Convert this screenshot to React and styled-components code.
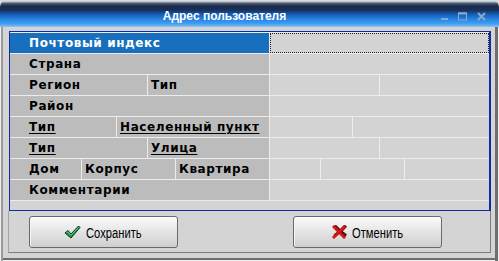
import React from "react";
import styled, { createGlobalStyle } from "styled-components";

const Global = createGlobalStyle`
  html, body { margin: 0; padding: 0; background: #dcdcdc; }
  #root { width: 499px; height: 261px; }
`;

const Window = styled.div`
  width: 499px;
  height: 261px;
  display: flex;
  flex-direction: column;
  overflow: hidden;
  font-family: "DejaVu Sans", "Liberation Sans", sans-serif;
`;

const TitleBar = styled.div`
  height: 27px;
  flex: none;
  display: flex;
  align-items: center;
  border-radius: 7px 7px 0 0;
  background: linear-gradient(
    to bottom,
    #e4e4e4 0px,
    #b4bcc6 2px,
    #51617e 3px,
    #1d2a45 6px,
    #16305e 10px,
    #1763bd 15px,
    #2b89e6 20px,
    #45a0f2 24px,
    #8cc4f2 27px
  );
`;

const Title = styled.div`
  flex: 1;
  text-align: center;
  color: #ffffff;
  font-family: "Liberation Sans", Arial, sans-serif;
  font-weight: bold;
  font-size: 12px;
  padding: 5px 0 0 8px;
`;

const Controls = styled.div`
  width: 58px;
  display: flex;
  align-items: center;
  padding-top: 5px;
`;

const ControlIcon = styled.svg`
  display: block;
  margin-right: ${(p) => p.$mr}px;
`;

const Body = styled.div`
  flex: 1;
  display: flex;
  flex-direction: column;
  background: #d4d4d4;
  padding: 4px 8px 0 8px;
  box-shadow: inset 1px 0 #eeeeee, inset 3px 0 #9a9a9a, inset -1px 0 #eeeeee,
    inset -4px 0 #6e6e6e, inset 0 -1px #eeeeee, inset 0 -3px #6e6e6e;
`;

const Frame = styled.div`
  margin-left: 1px;
  height: 180px;
  box-sizing: border-box;
  border: 1px solid #0d2f9e;
  border-right-width: 2px;
  background: #d4d4d4;
  display: flex;
  flex-direction: column;
`;

const Rows = styled.div`
  display: flex;
  flex-direction: column;
  gap: 1px;
  padding: 1px 0;
  background: #ececec;
`;

const Row = styled.div`
  display: flex;
  gap: 1px;
  height: 20px;
`;

const LabelGroup = styled.div`
  width: 259px;
  flex: none;
  display: flex;
  gap: 1px;
`;

const ValueGroup = styled.div`
  flex: 1;
  display: flex;
  gap: 1px;
`;

const LabelCell = styled.div`
  ${(p) => (p.$w ? `width: ${p.$w}px; flex: none;` : "flex: 1;")}
  box-sizing: border-box;
  padding-left: ${(p) => (p.$first ? 19 : 3)}px;
  display: flex;
  align-items: center;
  background: ${(p) => (p.$selected ? "#176fbd" : "#bcbcbc")};
  color: ${(p) => (p.$selected ? "#ffffff" : "#000000")};
  font-family: "DejaVu Sans", Verdana, sans-serif;
  font-weight: bold;
  font-size: 12px;
  letter-spacing: 0.6px;
  white-space: nowrap;
  text-decoration: ${(p) => (p.$link ? "underline" : "none")};
  text-underline-offset: 2px;
`;

const ValueCell = styled.div`
  ${(p) => (p.$w ? `width: ${p.$w}px; flex: none;` : "flex: 1;")}
  box-sizing: border-box;
  background: #d3d3d3;
  border: ${(p) => (p.$focus ? "1px dotted #222" : "none")};
`;

const Panel = styled.div`
  width: 483px;
  height: 42px;
  box-sizing: border-box;
  border-left: 1px solid #a4a4a4;
  border-right: 1px solid #7c7c7c;
  border-bottom: 1px solid #7c7c7c;
  display: flex;
  align-items: flex-start;
  gap: 115px;
  padding: 5px 0 0 20px;
`;

const Button = styled.button`
  width: 149px;
  height: 32px;
  box-sizing: border-box;
  border: 1px solid #6a6a6a;
  border-radius: 3px;
  background: linear-gradient(to bottom, #fbfbfb 0%, #e6e6e6 45%, #cfcfcf 100%);
  box-shadow: inset 0 1px #ffffff, inset 1px 0 #f4f4f4;
  display: flex;
  align-items: center;
  justify-content: center;
  gap: 0;
  padding: 0;
  color: #000;
`;

const ButtonText = styled.span`
  display: inline-block;
  font-family: "Liberation Sans", Arial, sans-serif;
  font-size: 14px;
  transform: scaleX(0.8);
  transform-origin: left center;
  margin: 1px -12px 0 5px;
`;

const BtnIcon = styled.svg`
  display: block;
  flex: none;
`;

const rows = [
  { labels: [{ t: "Почтовый индекс" }], values: [{}], selected: true },
  { labels: [{ t: "Страна" }], values: [{}] },
  { labels: [{ t: "Регион", w: 137 }, { t: "Тип" }], values: [{ w: 109 }, {}] },
  { labels: [{ t: "Район" }], values: [{}] },
  {
    labels: [{ t: "Тип", w: 106, link: true }, { t: "Населенный пункт", link: true }],
    values: [{ w: 82 }, {}],
  },
  {
    labels: [{ t: "Тип", w: 137, link: true }, { t: "Улица", link: true }],
    values: [{ w: 109 }, {}],
  },
  {
    labels: [{ t: "Дом", w: 71 }, { t: "Корпус", w: 93 }, { t: "Квартира" }],
    values: [{ w: 50 }, { w: 83 }, {}],
  },
  { labels: [{ t: "Комментарии" }], values: [{}] },
];

const CheckIcon = () => (
  <BtnIcon width="17" height="14" viewBox="0 0 17 14">
    <path
      d="M1 8 L4 5.5 L7 9 L14.5 1 L16 2.5 L7 13 Z"
      fill="#1f9a1f"
      stroke="#0b2a4a"
      strokeWidth="1"
      strokeLinejoin="round"
    />
    <path d="M2.5 8 L4 6.8 L7 10.2 L14.5 2.3" fill="none" stroke="#7be07b" strokeWidth="0.8" />
  </BtnIcon>
);

const CrossIcon = () => (
  <BtnIcon width="15" height="14" viewBox="0 0 15 14">
    <path
      d="M3 5 L7.5 9.5 M12 5 L7.5 9.5 M3 13 L7.5 9.5 M12 13 L7.5 9.5"
      stroke="#5a0a0a"
      strokeWidth="3.2"
      strokeLinecap="square"
      transform="translate(0.8 -3.2)"
    />
    <path
      d="M2 2 L12 12 M12 2 L2 12"
      stroke="#d01818"
      strokeWidth="3"
      strokeLinecap="square"
    />
  </BtnIcon>
);

export default function App() {
  return (
    <>
      <Global />
      <Window>
        <TitleBar>
          <Title>Адрес пользователя</Title>
          <Controls>
            <ControlIcon $mr={10} width="7" height="9" viewBox="0 0 7 9">
              <rect x="0" y="6" width="7" height="2" fill="#86a9cf" />
            </ControlIcon>
            <ControlIcon $mr={10} width="9" height="9" viewBox="0 0 9 9">
              <rect x="0.5" y="1" width="8" height="7" fill="none" stroke="#86a9cf" strokeWidth="1" />
              <rect x="0" y="0.5" width="9" height="2" fill="#86a9cf" />
            </ControlIcon>
            <ControlIcon $mr={0} width="9" height="9" viewBox="0 0 9 9">
              <path d="M1 1 L8 8 M8 1 L1 8" stroke="#86a9cf" strokeWidth="2" />
            </ControlIcon>
          </Controls>
        </TitleBar>
        <Body>
          <Frame>
            <Rows>
              {rows.map((r, i) => (
                <Row key={i}>
                  <LabelGroup>
                    {r.labels.map((l, j) => (
                      <LabelCell
                        key={j}
                        $w={l.w}
                        $first={j === 0}
                        $link={l.link}
                        $selected={r.selected}
                      >
                        {l.t}
                      </LabelCell>
                    ))}
                  </LabelGroup>
                  <ValueGroup>
                    {r.values.map((v, j) => (
                      <ValueCell key={j} $w={v.w} $focus={r.selected} />
                    ))}
                  </ValueGroup>
                </Row>
              ))}
            </Rows>
          </Frame>
          <Panel>
            <Button>
              <CheckIcon />
              <ButtonText>Сохранить</ButtonText>
            </Button>
            <Button>
              <CrossIcon />
              <ButtonText>Отменить</ButtonText>
            </Button>
          </Panel>
        </Body>
      </Window>
    </>
  );
}
